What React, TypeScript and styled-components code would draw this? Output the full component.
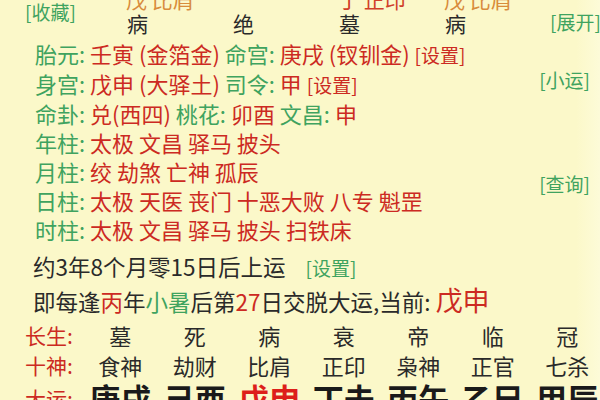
import React from 'react';
import styled, { createGlobalStyle } from 'styled-components';

const GlobalStyle = createGlobalStyle`
  html, body {
    margin: 0;
    padding: 0;
    width: 600px;
    height: 400px;
    overflow: hidden;
    background: #fbf8c9;
  }
  body {
    font-family: "Noto Sans CJK SC", "Noto Sans", sans-serif;
    color: #2a2a2a;
  }
`;

const GREEN = '#3fa35f';
const RED = '#cc2a22';
const ORANGE = '#d88c3c';

const Page = styled.div`
  width: 600px;
  height: 400px;
  overflow: hidden;
  background: linear-gradient(90deg, #fbf8c9 0%, #fbf8c9 96%, #fdfbd8 100%);
`;

const Header = styled.div`
  display: grid;
  grid-template-columns: 126px repeat(4, 106px) 1fr;
  grid-template-rows: 22px 26px;
  margin-top: -12px;
  font-size: 21px;
`;

const Cell = styled.div<{ $color?: string }>`
  line-height: 22px;
  white-space: nowrap;
  color: ${(p) => p.$color || '#2a2a2a'};
`;

const StateCell = styled(Cell)`
  line-height: 26px;
  padding-left: 1px;
`;

const Collect = styled.div`
  grid-row: 1 / span 2;
  grid-column: 1;
  align-self: center;
  padding-left: 25px;
  margin-bottom: 2px;
  font-size: 19px;
  white-space: nowrap;
  color: ${GREEN};
`;

const Expand = styled.div`
  grid-row: 2;
  grid-column: 6;
  justify-self: end;
  padding-right: 10px;
  font-size: 19px;
  line-height: 24px;
  white-space: nowrap;
  color: ${GREEN};
`;

const InfoBlock = styled.div`
  display: flex;
  justify-content: space-between;
  padding-left: 35px;
  margin-top: 3px;
`;

const Lines = styled.div`
  display: flex;
  flex-direction: column;
`;

const Line = styled.div`
  font-size: 22px;
  line-height: 29px;
  white-space: nowrap;
`;

const Label = styled.span`
  color: ${GREEN};
`;

const Value = styled.span`
  color: ${RED};
`;

const Bracket = styled.span<{ $color: string; $gap?: number }>`
  color: ${(p) => p.$color};
  font-size: 19px;
  margin-left: ${(p) => p.$gap || 0}px;
`;

const SideButtons = styled.div`
  display: flex;
  flex-direction: column;
  align-items: flex-end;
  padding-top: 30px;
  padding-right: 10px;
  gap: 82px;
  font-size: 19px;
  color: ${GREEN};
`;

const SideButton = styled.div`
  line-height: 22px;
  white-space: nowrap;
`;

const Note = styled.div<{ $top: number }>`
  padding-left: 33px;
  margin-top: ${(p) => p.$top}px;
  font-size: 22.5px;
  line-height: 30px;
  white-space: nowrap;
  color: #2a2a2a;
`;

const Hi = styled.span<{ $color: string; $size?: number }>`
  color: ${(p) => p.$color};
  font-size: ${(p) => (p.$size ? `${p.$size}px` : 'inherit')};
`;

const Table = styled.div`
  display: grid;
  grid-template-columns: 58px repeat(7, 74.5px);
  padding-left: 25px;
  margin-top: 4px;
`;

const RowLabel = styled.div`
  font-size: 21px;
  line-height: 30px;
  color: ${RED};
  white-space: nowrap;
`;

const TableCell = styled.div`
  text-align: center;
  font-size: 22px;
  line-height: 30px;
  white-space: nowrap;
  color: #2a2a2a;
`;

const BigLabel = styled(RowLabel)`
  line-height: 36px;
`;

const BigCell = styled.div<{ $current?: boolean }>`
  text-align: center;
  font-size: 31px;
  font-weight: 700;
  line-height: 36px;
  white-space: nowrap;
  color: ${(p) => (p.$current ? '#dd1f1a' : '#1a1a1a')};
`;

const topCells = [
  { text: '戊 比肩', color: ORANGE },
  { text: '', color: ORANGE },
  { text: '丁 正印', color: '#d0402a' },
  { text: '戊 比肩', color: ORANGE },
];
const states = ['病', '绝', '墓', '病'];

const changsheng = ['墓', '死', '病', '衰', '帝', '临', '冠'];
const shishen = ['食神', '劫财', '比肩', '正印', '枭神', '正官', '七杀'];
const dayun = ['庚戌', '己酉', '戊申', '丁未', '丙午', '乙巳', '甲辰'];

export default function App() {
  return (
    <Page>
      <GlobalStyle />
      <Header>
        <Collect>[收藏]</Collect>
        {topCells.map((c, i) => (
          <Cell key={'t' + i} $color={c.color} style={{ gridRow: 1, gridColumn: i + 2 }}>
            {c.text}
          </Cell>
        ))}
        {states.map((s, i) => (
          <StateCell key={'s' + i} style={{ gridRow: 2, gridColumn: i + 2 }}>
            {s}
          </StateCell>
        ))}
        <Expand>[展开]</Expand>
      </Header>

      <InfoBlock>
        <Lines>
          <Line>
            <Label>胎元: </Label>
            <Value>壬寅 (金箔金) </Value>
            <Label>命宫: </Label>
            <Value>庚戌 (钗钏金) </Value>
            <Bracket $color={RED}>[设置]</Bracket>
          </Line>
          <Line>
            <Label>身宫: </Label>
            <Value>戊申 (大驿土) </Value>
            <Label>司令: </Label>
            <Value>甲 </Value>
            <Bracket $color={RED}>[设置]</Bracket>
          </Line>
          <Line>
            <Label>命卦: </Label>
            <Value>兑(西四) </Value>
            <Label>桃花: </Label>
            <Value>卯酉 </Value>
            <Label>文昌: </Label>
            <Value>申</Value>
          </Line>
          <Line>
            <Label>年柱: </Label>
            <Value>太极 文昌 驿马 披头</Value>
          </Line>
          <Line>
            <Label>月柱: </Label>
            <Value>绞 劫煞 亡神 孤辰</Value>
          </Line>
          <Line>
            <Label>日柱: </Label>
            <Value>太极 天医 丧门 十恶大败 八专 魁罡</Value>
          </Line>
          <Line>
            <Label>时柱: </Label>
            <Value>太极 文昌 驿马 披头 扫铁床</Value>
          </Line>
        </Lines>
        <SideButtons>
          <SideButton>[小运]</SideButton>
          <SideButton>[查询]</SideButton>
        </SideButtons>
      </InfoBlock>

      <Note $top={7}>
        约3年8个月零15日后上运
        <Bracket $color={GREEN} $gap={20}>[设置]</Bracket>
      </Note>
      <Note $top={2}>
        即每逢<Hi $color={RED}>丙</Hi>年<Hi $color={GREEN}>小暑</Hi>后第
        <Hi $color={RED}>27</Hi>日交脱大运,当前: <Hi $color={RED} $size={27}>戊申</Hi>
      </Note>

      <Table>
        <RowLabel>长生:</RowLabel>
        {changsheng.map((c, i) => (
          <TableCell key={'c' + i}>{c}</TableCell>
        ))}
        <RowLabel>十神:</RowLabel>
        {shishen.map((c, i) => (
          <TableCell key={'g' + i}>{c}</TableCell>
        ))}
        <BigLabel>大运:</BigLabel>
        {dayun.map((c, i) => (
          <BigCell key={'d' + i} $current={i === 2}>
            {c}
          </BigCell>
        ))}
      </Table>
    </Page>
  );
}
